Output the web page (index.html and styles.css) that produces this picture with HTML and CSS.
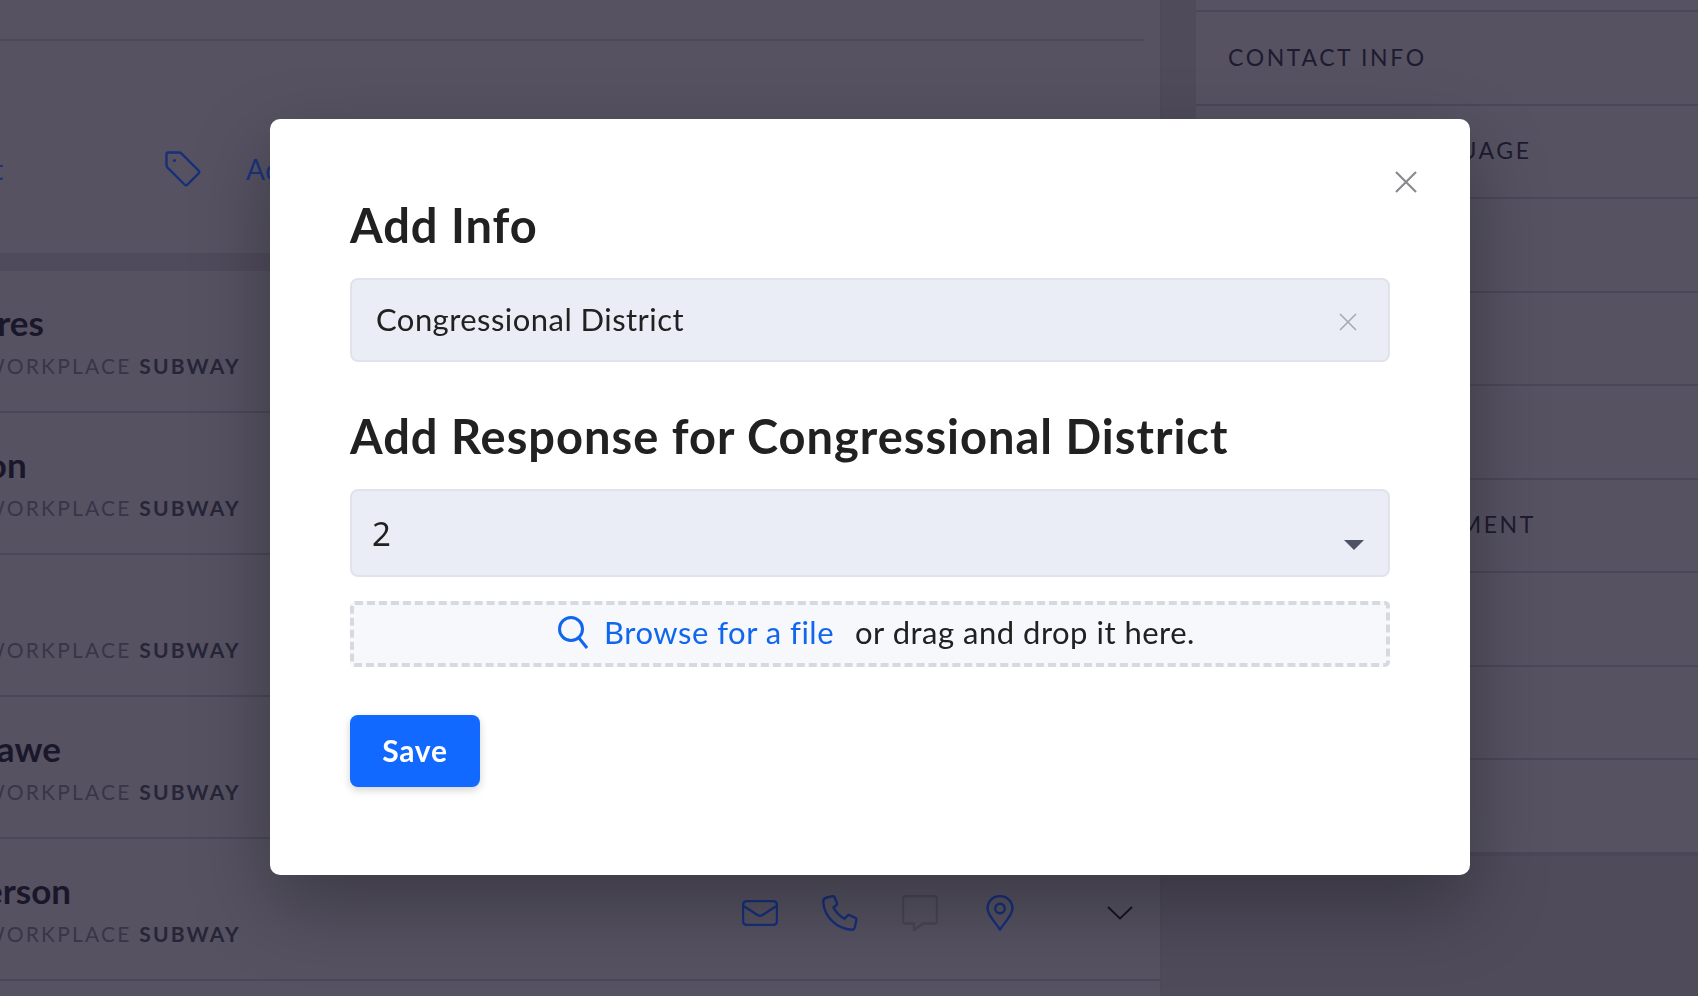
FILE: index.html
```html
<!DOCTYPE html>
<html>
  <head>
    <meta charset="utf-8" />
    <title>Add Info</title>
    <link rel="stylesheet" href="styles.css">
  </head>
  <body>
    <svg class="sprite" width="0" height="0">
      <symbol id="i-mail" viewBox="0 0 36 26">
        <rect x="1" y="1" width="34" height="24" rx="4" />
        <path d="M1.5 6 L15.5 15 Q18 16.5 20.5 15 L34.5 6" />
      </symbol>
      <symbol id="i-phone" viewBox="0 0 36 36">
        <path d="M5 2.5 L10.5 1.2 Q12 1 12.6 2.3 L15 8 Q15.4 9.2 14.5 10 L11.6 12.4 Q14.5 19 22.5 23.8 L25.5 20.6 Q26.4 19.8 27.5 20.2 L33.4 22.8 Q34.6 23.4 34.4 24.8 L33.2 30.4 Q32.8 34.8 30 34.8 C15 34 2 22 1.2 6.4 Q1.2 3.4 5 2.5 Z" />
      </symbol>
      <symbol id="i-chat" viewBox="0 0 36 36">
        <path d="M4 1 H32 Q35 1 35 4 V26 Q35 28.5 32 28.5 H21 L12 35 V28.5 H4 Q1 28.5 1 26 V4 Q1 1 4 1 Z" />
      </symbol>
      <symbol id="i-pin" viewBox="0 0 28 36">
        <path d="M14 34.5 C9 27 1.5 20 1.5 13.5 A12.5 12.5 0 0 1 26.5 13.5 C26.5 20 19 27 14 34.5 Z" />
        <circle cx="14" cy="13.5" r="4.8" />
      </symbol>
      <symbol id="i-chevron" viewBox="0 0 26 14">
        <path d="M1 1 L13 12.5 L25 1" />
      </symbol>
    </svg>

    <div class="page">
      <main class="main">
        <div class="top-bar"></div>
        <div class="actions">
          <a class="action action-first">Add Contact</a>
          <svg class="tag-icon" viewBox="0 0 36 36">
            <path d="M3 1.5 H14 Q15.5 1.5 16.6 2.6 L33.5 19.5 Q35 21 33.5 22.5 L22.5 33.5 Q21 35 19.5 33.5 L2.6 16.6 Q1.5 15.5 1.5 14 V3 Q1.5 1.5 3 1.5 Z" />
            <circle cx="9.5" cy="9.5" r="1.6" />
          </svg>
          <a class="action">Add Tag</a>
        </div>

        <div class="people">
          <div class="person">
            <div class="person-info">
              <div class="person-name name-a">Ana Maria Flores</div>
              <div class="person-meta">WORKPLACE <b>SUBWAY</b></div>
            </div>
          </div>
          <div class="person">
            <div class="person-info">
              <div class="person-name name-b">Marcus Wilson</div>
              <div class="person-meta">WORKPLACE <b>SUBWAY</b></div>
            </div>
          </div>
          <div class="person">
            <div class="person-info">
              <div class="person-name name-c">Ann Lee</div>
              <div class="person-meta">WORKPLACE <b>SUBWAY</b></div>
            </div>
          </div>
          <div class="person">
            <div class="person-info">
              <div class="person-name name-d">Kofi Asamoah Dawe</div>
              <div class="person-meta">WORKPLACE <b>SUBWAY</b></div>
            </div>
          </div>
          <div class="person">
            <div class="person-info">
              <div class="person-name name-e">Dana Patterson</div>
              <div class="person-meta">WORKPLACE <b>SUBWAY</b></div>
            </div>
            <div class="person-icons">
              <svg class="icon icon-mail"><use href="#i-mail" /></svg>
              <svg class="icon icon-phone"><use href="#i-phone" /></svg>
              <svg class="icon icon-chat"><use href="#i-chat" /></svg>
              <svg class="icon icon-pin"><use href="#i-pin" /></svg>
              <svg class="icon icon-chevron"><use href="#i-chevron" /></svg>
            </div>
          </div>
          <div class="person"></div>
        </div>
      </main>

      <aside class="side">
        <div class="side-item side-first"></div>
        <div class="side-item">CONTACT INFO</div>
        <div class="side-item">PREFERRED LANGUAGE</div>
        <div class="side-item">ADDRESS</div>
        <div class="side-item">WORKPLACE</div>
        <div class="side-item">NOTES</div>
        <div class="side-item">WORKER ENGAGEMENT</div>
        <div class="side-item">TAGS</div>
        <div class="side-item">ACTIONS</div>
        <div class="side-item side-last">FILES</div>
      </aside>
    </div>

    <div class="overlay">
      <div class="modal">
        <svg class="modal-close" viewBox="0 0 22 22">
          <path d="M1 1 L21 21 M21 1 L1 21" />
        </svg>
        <h2 class="modal-title">Add Info</h2>
        <div class="field">
          <span>Congressional District</span>
          <svg class="field-clear" viewBox="0 0 18 18">
            <path d="M1 1 L17 17 M17 1 L1 17" />
          </svg>
        </div>
        <h2 class="modal-title title-second">Add Response for Congressional District</h2>
        <div class="select">
          <span class="select-value">2</span>
          <span class="select-arrow"></span>
        </div>
        <div class="dropzone">
          <svg class="search-icon" viewBox="0 0 30 33">
            <circle cx="13" cy="13" r="11.5" />
            <path d="M21 22 L29 32" />
          </svg>
          <a class="browse">Browse for a file</a>
          <span class="drop-text">or drag and drop it here.</span>
        </div>
        <button class="save">Save</button>
      </div>
    </div>
  </body>
</html>
```

FILE: styles.css
```css
body {
  margin: 0;
  background-color: #4f4b5b;
  font-family: "Lato", "Liberation Sans", sans-serif;
  overflow: hidden;
}

.sprite {
  position: absolute;
}

.page {
  display: flex;
  height: 996px;
  overflow: hidden;
}

/* main column behind the dialog */
.main {
  width: 1160px;
  flex-shrink: 0;
  background-color: #565262;
  border-right: 1px solid #4d4959;
}

.top-bar {
  height: 39px;
  margin-right: 16px;
  border-bottom: 2px solid #4d4959;
}

.actions {
  display: flex;
  align-items: center;
  height: 212px;
  padding-top: 44px;
  box-sizing: border-box;
}

.action {
  font-size: 28px;
  letter-spacing: 0.5px;
  color: #1b337c;
  white-space: nowrap;
}

.action-first {
  width: 321px;
  margin-left: -156px;
  flex-shrink: 0;
}

.tag-icon {
  width: 36px;
  height: 36px;
  margin-right: 45px;
  flex-shrink: 0;
}

.tag-icon path {
  fill: none;
  stroke: #17307a;
  stroke-width: 2.4;
}

.tag-icon circle {
  fill: #17307a;
}

.people {
  border-top: 18px solid #4f4b5c;
}

.person {
  display: flex;
  align-items: center;
  height: 142px;
  box-sizing: border-box;
  border-bottom: 2px solid #4b4759;
}

.person-info {
  width: 243px;
  display: flex;
  flex-direction: column;
  align-items: flex-start;
  margin-left: -17px;
  white-space: nowrap;
}

.person-name {
  margin-top: -2px;
  font-size: 35px;
  font-weight: 700;
  line-height: 44px;
  color: #1a172b;
}

.name-a {
  margin-left: -203px;
}

.name-b {
  margin-left: -189px;
}

.name-c {
  margin-left: -140px;
}

.name-d {
  margin-left: -236px;
}

.name-e {
  margin-left: -152px;
}

.person-meta {
  margin-top: 8px;
  font-size: 21px;
  line-height: 28px;
  letter-spacing: 2.2px;
  color: #383549;
}

.person-meta b {
  font-weight: 700;
  color: #272538;
}

.person-icons {
  display: flex;
  align-items: center;
  margin-left: 516px;
  margin-top: 7px;
}

.icon {
  fill: none;
  stroke: #17307a;
  stroke-width: 2.4;
  flex-shrink: 0;
}

.icon-mail {
  width: 36px;
  height: 26px;
  margin-right: 44px;
}

.icon-phone {
  width: 36px;
  height: 36px;
  margin-right: 44px;
}

.icon-chat {
  width: 36px;
  height: 36px;
  margin-right: 48px;
  stroke: #4a4656;
}

.icon-pin {
  width: 28px;
  height: 36px;
  margin-right: 93px;
}

.icon-chevron {
  width: 26px;
  height: 14px;
  stroke: #16141f;
  stroke-width: 1.8;
}

/* right column behind the dialog */
.side {
  width: 503px;
  margin-left: 35px;
  flex-shrink: 0;
  align-self: flex-start;
  background-color: #565262;
}

.side-item {
  height: 93.5px;
  box-sizing: border-box;
  display: flex;
  align-items: center;
  padding-left: 32px;
  padding-bottom: 2px;
  border-bottom: 2px solid #4b4759;
  font-size: 23px;
  letter-spacing: 2.6px;
  color: #1e1b30;
  white-space: nowrap;
}

.side-first {
  height: 12px;
  padding-bottom: 0;
}

.side-last {
  height: 96px;
  border-bottom-width: 4px;
}

/* dialog */
.overlay {
  position: fixed;
  top: 0;
  left: 0;
  right: 0;
  bottom: 0;
  display: flex;
  align-items: flex-start;
  padding: 119px 0 0 270px;
}

.modal {
  position: relative;
  width: 1200px;
  height: 756px;
  box-sizing: border-box;
  padding: 78px 80px 0;
  background-color: #fff;
  border-radius: 10px;
  box-shadow: 0 30px 80px rgba(0, 0, 0, 0.3);
}

.modal-close {
  position: absolute;
  top: 52px;
  right: 53px;
  width: 22px;
  height: 22px;
  fill: none;
  stroke: #888a8e;
  stroke-width: 2.2;
}

.modal-title {
  margin: 0 0 25px;
  font-size: 47px;
  font-weight: 700;
  line-height: 56px;
  letter-spacing: 1px;
  color: #212121;
}

.title-second {
  margin-top: 46px;
}

.field {
  display: flex;
  align-items: center;
  justify-content: space-between;
  height: 84px;
  box-sizing: border-box;
  padding: 0 31px 2px 24px;
  background-color: #eaedf5;
  border: 2px solid #e0e3ee;
  border-radius: 8px;
  font-size: 31px;
  letter-spacing: 0.45px;
  color: #212121;
}

.field-clear {
  width: 18px;
  height: 18px;
  margin-top: 5px;
  fill: none;
  stroke: #a8a9ad;
  stroke-width: 1.6;
}

.select {
  display: flex;
  justify-content: space-between;
  align-items: center;
  height: 88px;
  box-sizing: border-box;
  padding: 0 24px 0 20px;
  background-color: #eaedf5;
  border: 2px solid #e0e3ee;
  border-radius: 8px;
}

.select-value {
  font-family: "Noto Sans", sans-serif;
  font-size: 33px;
  color: #212121;
}

.select-arrow {
  margin-top: 23px;
  border-top: 10px solid #4d5266;
  border-left: 10px solid transparent;
  border-right: 10px solid transparent;
}

.dropzone {
  display: flex;
  align-items: center;
  justify-content: center;
  height: 66px;
  box-sizing: border-box;
  margin-top: 24px;
  padding: 0 0 4px 13px;
  background-color: #f7f8fc;
  border: 4px dashed #d8d9e0;
  border-radius: 5px;
  font-size: 31px;
  letter-spacing: 0.5px;
}

.search-icon {
  width: 30px;
  height: 33px;
  margin-right: 16px;
  fill: none;
  stroke: #1166ee;
  stroke-width: 3;
}

.browse {
  color: #1166ee;
}

.drop-text {
  margin-left: 21px;
  color: #212121;
}

.save {
  display: block;
  width: 130px;
  height: 72px;
  margin-top: 48px;
  padding: 0 0 3px;
  border: 0;
  border-radius: 8px;
  background-color: #1269ff;
  box-shadow: 0 3px 8px rgba(0, 0, 0, 0.18);
  color: #fff;
  font-family: inherit;
  font-size: 30px;
  font-weight: 700;
  letter-spacing: 0.7px;
}
```
